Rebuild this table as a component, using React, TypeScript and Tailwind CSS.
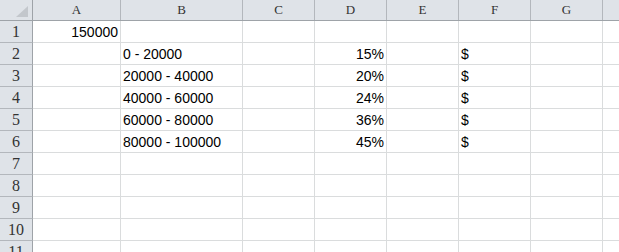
import React from "react";

type Cell = { text: string; align?: "left" | "right" };

const columns = [
  { name: "A", width: "w-[88px]" },
  { name: "B", width: "w-[122px]" },
  { name: "C", width: "w-[72px]" },
  { name: "D", width: "w-[72px]" },
  { name: "E", width: "w-[72px]" },
  { name: "F", width: "w-[72px]" },
  { name: "G", width: "w-[72px]" },
  { name: "", width: "w-[40px]" },
];

const rows: Record<number, Record<string, Cell>> = {
  1: { A: { text: "150000", align: "right" } },
  2: {
    B: { text: "0 - 20000" },
    D: { text: "15%", align: "right" },
    F: { text: "$" },
  },
  3: {
    B: { text: "20000 - 40000" },
    D: { text: "20%", align: "right" },
    F: { text: "$" },
  },
  4: {
    B: { text: "40000 - 60000" },
    D: { text: "24%", align: "right" },
    F: { text: "$" },
  },
  5: {
    B: { text: "60000 - 80000" },
    D: { text: "36%", align: "right" },
    F: { text: "$" },
  },
  6: {
    B: { text: "80000 - 100000" },
    D: { text: "45%", align: "right" },
    F: { text: "$" },
  },
};

export default function App() {
  return (
    <div className="w-[619px] h-[252px] overflow-hidden bg-white">
      {renderHeader()}
      {Array.from({ length: 11 }, (_, i) => renderRow(i + 1))}
    </div>
  );

  function renderHeader() {
    return (
      <div className="flex h-[21px] bg-[#dfe3e8] border-b border-[#9ea3a8] whitespace-nowrap">
        <div className="w-[33px] shrink-0 border-r border-[#9ea3a8] relative">
          <svg className="absolute right-[4px] bottom-[3px]" width="12" height="11" viewBox="0 0 12 11">
            <polygon points="12,0 12,11 0,11" fill="#c3c7cc" />
          </svg>
        </div>
        {columns.map((col) => (
          <div
            key={col.name}
            className={`${col.width} shrink-0 border-r border-[#b3b7bc] flex items-center justify-center text-[13px] text-[#333] font-['Liberation_Serif',serif]`}
          >
            {col.name}
          </div>
        ))}
      </div>
    );
  }

  function renderRow(rowNumber: number) {
    const data = rows[rowNumber] || {};
    return (
      <div key={rowNumber} className="flex h-[22px] whitespace-nowrap">
        <div className="w-[33px] shrink-0 bg-[#dfe3e8] border-r border-b border-r-[#9ea3a8] border-b-[#b3b7bc] flex items-center justify-center text-[16px] text-[#333] font-['Liberation_Serif',serif]">
          {rowNumber}
        </div>
        {columns.map((col) => {
          const cell = data[col.name];
          return (
            <div
              key={col.name}
              className={`${col.width} shrink-0 border-r border-b border-[#dadcdd] flex items-center pt-[1px] px-[2px] text-[14px] text-black font-['Liberation_Sans',sans-serif] ${
                cell && cell.align === "right" ? "justify-end" : "justify-start"
              }`}
            >
              {cell ? cell.text : ""}
            </div>
          );
        })}
      </div>
    );
  }
}
